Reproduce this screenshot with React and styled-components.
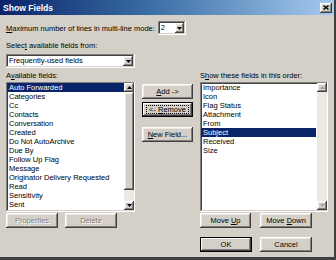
import React from 'react';
import styled, { createGlobalStyle, css } from 'styled-components';

const GlobalStyle = createGlobalStyle`
  html, body {
    margin: 0;
    padding: 0;
    background: #d4d0c8;
  }
  body {
    font-family: "Liberation Sans", Arial, sans-serif;
    font-size: 7.5px;
    color: #000;
  }
`;

const raised = css`
  background: #d4d0c8;
  box-shadow: inset -1px -1px #404040, inset 1px 1px #ffffff,
    inset -2px -2px #808080, inset 2px 2px #ece9e4;
`;

const sunken = css`
  box-shadow: inset -1px -1px #ffffff, inset 1px 1px #808080,
    inset -2px -2px #d4d0c8, inset 2px 2px #404040;
`;

const Window = styled.div`
  width: 336px;
  height: 260px;
  box-sizing: border-box;
  background: #d4d0c8;
  border-right: 2px solid #404040;
  border-bottom: 3px solid #404040;
  display: flex;
  flex-direction: column;
  overflow: hidden;
`;

const TitleBar = styled.div`
  height: 15px;
  flex: none;
  display: flex;
  align-items: center;
  justify-content: space-between;
  padding: 0 2px 0 3px;
  background: linear-gradient(to right, #0a246a 0%, #3a6ea5 45%, #a6caf0 100%);
  color: #fff;
  font-weight: bold;
  font-size: 8.6px;
`;

const CloseButton = styled.div`
  ${raised};
  width: 12px;
  height: 10px;
  display: flex;
  align-items: center;
  justify-content: center;
`;

const Body = styled.div`
  padding: 6px 0 0 6px;
  display: flex;
  flex-direction: column;
`;

const TopRow = styled.div`
  height: 14px;
  display: flex;
  align-items: center;
  gap: 3px;
`;

const Label = styled.div`
  height: 9px;
  line-height: 9px;
  white-space: nowrap;
  margin-top: ${p => p.$mt || 0}px;
`;

const Combo = styled.div`
  ${sunken};
  background: #fff;
  width: ${p => p.$w}px;
  height: 14px;
  box-sizing: border-box;
  padding: 2px;
  display: flex;
  align-items: center;
  margin-top: ${p => p.$mt || 0}px;
`;

const ComboText = styled.div`
  flex: 1;
  padding-left: 1px;
  line-height: 10px;
  white-space: nowrap;
`;

const ArrowButton = styled.div`
  ${raised};
  width: ${p => p.$w || 10}px;
  height: ${p => p.$h || 10}px;
  flex: none;
  display: flex;
  align-items: center;
  justify-content: center;
`;

const Columns = styled.div`
  margin-top: 3px;
  display: grid;
  grid-template-columns: 129px 51px 128px;
  column-gap: 7px;
`;

const Column = styled.div`
  display: flex;
  flex-direction: column;
  padding-top: ${p => p.$pt || 0}px;
`;

const ListBox = styled.div`
  ${sunken};
  background: #fff;
  margin-top: 2px;
  height: 130px;
  box-sizing: border-box;
  padding: 1px 1px 2px 1px;
  display: flex;
`;

const Items = styled.div`
  flex: 1;
  display: flex;
  flex-direction: column;
  padding-right: ${p => p.$gap || 0}px;
`;

const Item = styled.div`
  height: 9px;
  line-height: 9px;
  padding-left: 2px;
  white-space: nowrap;
  background: ${p => (p.$selected ? '#0a246a' : 'transparent')};
  color: ${p => (p.$selected ? '#fff' : '#000')};
`;

const ScrollBar = styled.div`
  width: 10px;
  flex: none;
  display: flex;
  flex-direction: column;
  background: #ece9e4;
`;

const Thumb = styled.div`
  ${raised};
  height: ${p => p.$h}px;
  flex: none;
`;

const Track = styled.div`
  flex: 1;
`;

const ButtonRow = styled.div`
  display: flex;
  gap: ${p => p.$gap}px;
  margin-top: ${p => p.$mt}px;
`;

const Button = styled.div`
  ${raised};
  width: ${p => p.$w || 51}px;
  height: 15px;
  box-sizing: border-box;
  display: flex;
  align-items: center;
  justify-content: center;
  white-space: nowrap;
  margin-top: ${p => p.$mt || 0}px;
  position: relative;
  ${p =>
    p.$disabled &&
    css`
      color: #808080;
      text-shadow: 1px 1px #ffffff;
    `}
  ${p =>
    p.$default &&
    css`
      box-shadow: inset 0 0 0 1px #000, inset -2px -2px #404040,
        inset 2px 2px #ffffff, inset -3px -3px #808080;
    `}
`;

const Focus = styled.span`
  position: absolute;
  inset: 3px 4px;
  border: 1px dotted #000;
`;

const Acc = styled.u`
  text-decoration: underline;
  text-underline-offset: 1px;
`;

const Tri = ({ up, color = '#000' }) => (
  <svg width="5" height="3" viewBox="0 0 5 3">
    <polygon points={up ? '2.5,0 5,3 0,3' : '0,0 5,0 2.5,3'} fill={color} />
  </svg>
);

const available = [
  'Auto Forwarded',
  'Categories',
  'Cc',
  'Contacts',
  'Conversation',
  'Created',
  'Do Not AutoArchive',
  'Due By',
  'Follow Up Flag',
  'Message',
  'Originator Delivery Requested',
  'Read',
  'Sensitivity',
  'Sent',
];

const shown = ['Importance', 'Icon', 'Flag Status', 'Attachment', 'From', 'Subject', 'Received', 'Size'];

export default function App() {
  return (
    <>
      <GlobalStyle />
      <Window>
        <TitleBar>
          <span>Show Fields</span>
          <CloseButton>
            <svg width="6" height="5" viewBox="0 0 6 5">
              <path d="M0.5 0.5 L5.5 4.5 M5.5 0.5 L0.5 4.5" stroke="#000" strokeWidth="1.4" />
            </svg>
          </CloseButton>
        </TitleBar>
        <Body>
          <TopRow>
            <Label>
              <Acc>M</Acc>aximum number of lines in multi-line mode:
            </Label>
            <Combo $w={28}>
              <ComboText>2</ComboText>
              <ArrowButton $w={9}>
                <Tri />
              </ArrowButton>
            </Combo>
          </TopRow>
          <Label $mt={6}>
            Selec<Acc>t</Acc> available fields from:
          </Label>
          <Combo $w={129} $mt={4}>
            <ComboText>Frequently-used fields</ComboText>
            <ArrowButton>
              <Tri />
            </ArrowButton>
          </Combo>
          <Columns>
            <Column>
              <Label>
                A<Acc>v</Acc>ailable fields:
              </Label>
              <ListBox>
                <Items>
                  {available.map((f, i) => (
                    <Item key={f} $selected={i === 0}>
                      {f}
                    </Item>
                  ))}
                </Items>
                <ScrollBar>
                  <ArrowButton $h={9}>
                    <Tri up />
                  </ArrowButton>
                  <Thumb $h={98} />
                  <Track />
                  <ArrowButton $h={9}>
                    <Tri />
                  </ArrowButton>
                </ScrollBar>
              </ListBox>
              <ButtonRow $gap={7} $mt={1}>
                <Button $w={52} $disabled>
                  Properties
                </Button>
                <Button $w={52} $disabled>
                  Delete
                </Button>
              </ButtonRow>
            </Column>
            <Column $pt={13}>
              <Button>
                <span>
                  <Acc>A</Acc>dd -&gt;
                </span>
              </Button>
              <Button $default $mt={3}>
                <span>
                  &lt;- <Acc>R</Acc>emove
                </span>
                <Focus />
              </Button>
              <Button $mt={10}>
                <span>
                  <Acc>N</Acc>ew Field...
                </span>
              </Button>
            </Column>
            <Column>
              <Label>
                S<Acc>h</Acc>ow these fields in this order:
              </Label>
              <ListBox>
                <Items $gap={1}>
                  {shown.map(f => (
                    <Item key={f} $selected={f === 'Subject'}>
                      {f}
                    </Item>
                  ))}
                </Items>
                <ScrollBar>
                  <ArrowButton $h={9}>
                    <Tri up color="#a0a0a0" />
                  </ArrowButton>
                  <Track />
                  <ArrowButton $h={9}>
                    <Tri color="#a0a0a0" />
                  </ArrowButton>
                </ScrollBar>
              </ListBox>
              <ButtonRow $gap={9} $mt={1}>
                <Button $w={51}>
                  <span>
                    Move <Acc>U</Acc>p
                  </span>
                </Button>
                <Button $w={52}>
                  <span>
                    Move <Acc>D</Acc>own
                  </span>
                </Button>
              </ButtonRow>
              <ButtonRow $gap={8} $mt={9}>
                <Button $w={52} $default>
                  OK
                </Button>
                <Button $w={52}>Cancel</Button>
              </ButtonRow>
            </Column>
          </Columns>
        </Body>
      </Window>
    </>
  );
}
